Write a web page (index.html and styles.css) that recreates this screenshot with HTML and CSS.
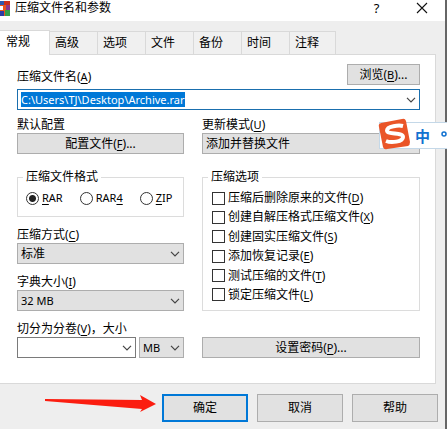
FILE: index.html
```html
<!DOCTYPE html>
<html lang="zh-CN">
<head>
<meta charset="utf-8">
<title>压缩文件名和参数</title>
<link rel="stylesheet" href="styles.css">
</head>
<body>
<svg width="0" height="0" class="defs" aria-hidden="true">
  <symbol id="chevron" viewBox="0 0 10 6"><path d="M1 .8 5 4.8 9 .8" fill="none" stroke="#444" stroke-width="1.2"/></symbol>
</svg>
<main class="dialog">
  <header class="titlebar">
    <svg class="app-icon" viewBox="0 0 10 15" aria-hidden="true">
      <path fill="#2c5bb0" d="M0 0h4v4H0z"/><path fill="#e8571c" d="M0 4h6v6H0z"/><path fill="#2c3ca4" d="M0 10h4v5H0z"/>
      <path fill="#c8321f" d="M4 0h6v4H4z"/><path fill="#8a3a8c" d="M6 4h4v5H6z"/><path fill="#35a04a" d="M5 9h5v6H5z"/>
      <path fill="#fff" d="M0 5h3v4H0z"/><path fill="#e8571c" d="M4 9h1v6H4z"/>
    </svg>
    <h1>压缩文件名和参数</h1>
    <button class="caption" type="button" aria-label="帮助主题">?</button>
    <button class="caption" type="button" aria-label="关闭"><svg viewBox="0 0 12 12" width="12" height="12"><path d="M1 1l10 10M11 1 1 11" stroke="#111" stroke-width="1.1"/></svg></button>
  </header>
  <nav class="tabs" role="tablist">
    <button class="tab active" type="button" role="tab" aria-selected="true">常规</button>
    <button class="tab" type="button" role="tab">高级</button>
    <button class="tab" type="button" role="tab">选项</button>
    <button class="tab" type="button" role="tab">文件</button>
    <button class="tab" type="button" role="tab">备份</button>
    <button class="tab" type="button" role="tab">时间</button>
    <button class="tab" type="button" role="tab">注释</button>
  </nav>
  <section class="panel">
    <div class="name-row">
      <label for="name">压缩文件名(<u>A</u>)</label>
      <button class="btn browse" type="button">浏览(<u>B</u>)...</button>
    </div>
    <div class="combo focused">
      <input id="name" type="text" value="C:\Users\TJ\Desktop\Archive.rar" spellcheck="false">
      <svg class="chevron"><use href="#chevron"/></svg>
    </div>
    <div class="columns">
      <div class="field">
        <span>默认配置</span>
        <button class="btn" type="button">配置文件(<u>F</u>)...</button>
      </div>
      <div class="field">
        <label for="mode">更新模式(<u>U</u>)</label>
        <div class="combo grey"><select id="mode"><option>添加并替换文件</option></select></div>
      </div>
      <div class="stack">
        <fieldset class="formats">
          <legend>压缩文件格式</legend>
          <label><input type="radio" name="format" checked><span><u>R</u>AR</span></label>
          <label><input type="radio" name="format"><span>RAR<u>4</u></span></label>
          <label><input type="radio" name="format"><span><u>Z</u>IP</span></label>
        </fieldset>
        <div class="field">
          <label for="method">压缩方式(<u>C</u>)</label>
          <div class="combo grey"><select id="method"><option>标准</option></select><svg class="chevron"><use href="#chevron"/></svg></div>
        </div>
        <div class="field">
          <label for="dict">字典大小(<u>I</u>)</label>
          <div class="combo grey"><select id="dict" class="latin"><option>32 MB</option></select><svg class="chevron"><use href="#chevron"/></svg></div>
        </div>
      </div>
      <fieldset class="options">
        <legend>压缩选项</legend>
        <label><input type="checkbox"><span>压缩后删除原来的文件(<u>D</u>)</span></label>
        <label><input type="checkbox"><span>创建自解压格式压缩文件(<u>X</u>)</span></label>
        <label><input type="checkbox"><span>创建固实压缩文件(<u>S</u>)</span></label>
        <label><input type="checkbox"><span>添加恢复记录(<u>E</u>)</span></label>
        <label><input type="checkbox"><span>测试压缩的文件(<u>T</u>)</span></label>
        <label><input type="checkbox"><span>锁定压缩文件(<u>L</u>)</span></label>
      </fieldset>
      <div class="field">
        <label for="volume">切分为分卷(<u>V</u>)，大小</label>
        <div class="volume">
          <div class="combo size"><input id="volume" type="text"><svg class="chevron"><use href="#chevron"/></svg></div>
          <div class="combo grey unit"><select class="latin" aria-label="单位"><option>MB</option></select><svg class="chevron"><use href="#chevron"/></svg></div>
        </div>
      </div>
      <button class="btn password" type="button">设置密码(<u>P</u>)...</button>
    </div>
  </section>
  <footer class="actions">
    <svg class="arrow" viewBox="0 0 112 20" aria-hidden="true"><path d="M1 5 98 6 96 1 112 10 96 18 98 15 1 7Z" fill="#fb1d10"/></svg>
    <button class="btn default" type="button">确定</button>
    <button class="btn" type="button">取消</button>
    <button class="btn" type="button">帮助</button>
  </footer>
</main>
<aside class="ime">
  <svg class="ime-logo" viewBox="0 0 32 32" aria-hidden="true">
    <path d="M3 5 24 1Q27 0 28 3L32 24Q32 27 30 28L9 31Q6 32 5 29L1 9Q0 6 3 5Z" fill="#ea5528"/>
    <path d="M25 8C21 7 9 8 9 12.500C9 17 25 14 25 19C25 24 13 25 8 23" fill="none" stroke="#fff" stroke-width="4"/>
  </svg>
  <span class="ime-mode">中</span>
  <svg class="ime-dot" viewBox="0 0 6 10" aria-hidden="true"><circle cx="3" cy="3" r="2" fill="none" stroke="#1272d0" stroke-width="1.5"/></svg>
</aside>
<script src="main.js"></script>
</body>
</html>
```
FILE: styles.css
```css
* { box-sizing: border-box; }
body {
  margin: 0;
  background: #666;
  color: #000;
  font: 12px/16px "Noto Sans", "Noto Sans CJK SC", sans-serif;
}
button, input, select { font: inherit; color: inherit; margin: 0; }
u { font-size: 11px; text-underline-offset: 2px; }
.defs { position: absolute; }
.dialog { margin-right: 2px; background: #eee; min-height: 100vh; }
.titlebar {
  display: flex;
  align-items: center;
  height: 21px;
  padding-bottom: 5px;
  padding-right: 12px;
  background: #fff;
}
.app-icon { width: 10px; height: 15px; }
h1 { flex: 1; margin: 0 0 0 5px; font-size: 12px; font-weight: 400; }
.caption {
  display: flex;
  align-items: center;
  justify-content: center;
  width: 23px;
  height: 16px;
  margin-left: 22px;
  padding: 0;
  border: 0;
  background: none;
  font-size: 13px;
}
.tabs { display: flex; align-items: flex-end; margin-top: 9px; }
.tab {
  width: 48px;
  height: 23px;
  padding: 0 0 0 5px;
  border: 1px solid #d9d9d9;
  border-width: 1px 1px 0 0;
  background: #f0f0f0;
  text-align: left;
}
.tab.active {
  width: 50px;
  height: 25px;
  margin-bottom: -1px;
  padding: 0 0 3px 6px;
  background: #fff;
  position: relative;
}
.tab:last-child { width: 46px; }
.panel {
  margin-right: 9px;
  padding: 9px 15px 25px 17px;
  border: 1px solid #d9d9d9;
  border-left: 0;
  background: #fff;
}
.name-row { display: flex; justify-content: space-between; align-items: flex-end; margin-bottom: 4px; }
.btn {
  height: 21px;
  padding: 0;
  border: 1px solid #adadad;
  background: #e1e1e1;
  line-height: 16px;
}
.browse { width: 73px; }
.combo { position: relative; height: 21px; border: 1px solid #7a7a7a; background: #fff; }
.combo input, .combo select {
  display: block;
  width: 100%;
  height: 19px;
  padding: 0 20px 0 3px;
  border: 0;
  outline: 0;
  border-radius: 0;
  background: none;
  appearance: none;
}
.combo input, .combo .latin { font-size: 11px; }
.combo.focused { border-color: #1a6fae; }
.combo.grey { border-color: #adadad; background: #e1e1e1; }
.combo input::selection { background: #0078d7; color: #fff; }
.chevron { position: absolute; right: 3px; top: 7px; width: 10px; height: 6px; pointer-events: none; }
.columns {
  display: grid;
  grid-template-columns: 167fr 218fr;
  gap: 10px 18px;
  margin-top: 7px;
}
.field { display: flex; flex-direction: column; }
.stack { display: flex; flex-direction: column; gap: 10px; margin-top: 5px; }
fieldset { min-width: 0; margin: 0; border: 1px solid #dcdcdc; }
legend { padding: 0 3px; }
fieldset label { display: flex; align-items: center; }
.formats { display: flex; gap: 17px; height: 48px; padding: 5px 0 0 8px; }
.formats legend { margin-left: -3px; }
.formats label { height: 16px; gap: 3px; font-size: 11px; }
.options {
  display: flex;
  flex-direction: column;
  justify-content: space-between;
  margin-top: 5px;
  padding: 5px 0 7px 9px;
}
.options legend { margin-left: -4px; }
.options label { gap: 3px; }
input[type="radio"], input[type="checkbox"] {
  flex: none;
  width: 13px;
  height: 13px;
  border: 1px solid #333;
  background: #fff;
  appearance: none;
}
input[type="radio"] { border-radius: 50%; }
input[type="radio"]:checked { background: radial-gradient(circle, #222 0 3px, #fff 4px); }
.volume { display: flex; gap: 3px; }
.size { flex: 1; }
.unit { width: 45px; }
.password { align-self: end; }
.actions { display: flex; justify-content: flex-end; gap: 9px; padding: 10px 7px 7px; }
.actions .btn { width: 86px; height: 28px; }
.actions .default { border: 2px solid #0078d7; }
.arrow { width: 112px; height: 20px; margin-right: -3px; }
.ime {
  position: absolute;
  top: 122px;
  right: 0;
  display: flex;
  align-items: center;
  width: 68px;
  height: 27px;
  border: 1px solid #c4d8e8;
  border-right: 0;
  background: #fff;
}
.ime-logo { flex: none; width: 32px; height: 32px; margin: -4px 5px 0 -2px; }
.ime-mode { color: #1272d0; font-size: 15px; font-weight: 700; }
.ime-dot { width: 6px; height: 10px; margin-left: auto; }
```
FILE: main.js
```js
document.getElementById("name").select();
```
